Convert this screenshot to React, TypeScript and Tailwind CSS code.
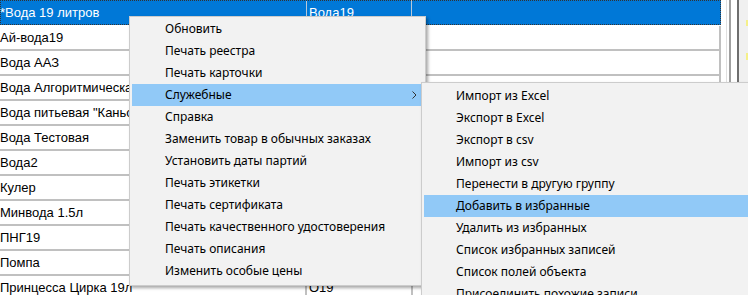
import React from "react";

const rows = [
  { a: "*Вода 19 литров", b: "Вода19" },
  { a: "Ай-вода19", b: "" },
  { a: "Вода ААЗ", b: "" },
  { a: "Вода Алгоритмическая", b: "" },
  { a: "Вода питьевая \"Каньон\"", b: "" },
  { a: "Вода Тестовая", b: "" },
  { a: "Вода2", b: "" },
  { a: "Кулер", b: "" },
  { a: "Минвода 1.5л", b: "" },
  { a: "ПНГ19", b: "" },
  { a: "Помпа", b: "" },
  { a: "Принцесса Цирка 19л", b: "О19" },
];

const mainItems = [
  "Обновить",
  "Печать реестра",
  "Печать карточки",
  "Служебные",
  "Справка",
  "Заменить товар в обычных заказах",
  "Установить даты партий",
  "Печать этикетки",
  "Печать сертификата",
  "Печать качественного удостоверения",
  "Печать описания",
  "Изменить особые цены",
];

const subItems = [
  "Импорт из Excel",
  "Экспорт в Excel",
  "Экспорт в csv",
  "Импорт из csv",
  "Перенести в другую группу",
  "Добавить в избранные",
  "Удалить из избранных",
  "Список избранных записей",
  "Список полей объекта",
  "Присоединить похожие записи",
];

export default function App() {
  return (
    <div className="relative w-[748px] h-[295px] overflow-hidden bg-white">
      <div className="flex h-full">
        <div className="flex flex-col w-[721px] font-['Liberation_Sans',sans-serif] text-[13px] text-black">
          {rows.map((r, i) =>
            i === 0 ? (
              <div key={i} className="relative flex h-[26px] shrink-0 border-b border-white bg-[#0078d7] text-white">
                <div className="w-[307px] pl-0 flex items-center border-r border-[#b8c8d8] whitespace-nowrap overflow-hidden">{r.a}</div>
                <div className="w-[105px] pl-[2px] flex items-center border-r border-[#b8c8d8] whitespace-nowrap overflow-hidden">{r.b}</div>
                <div className="flex-1" />
                <div className="absolute inset-0 border border-dotted border-[#333]" />
              </div>
            ) : (
              <div key={i} className="flex h-[25px] shrink-0 border-b-2 border-[#c0c0c0]">
                <div className="w-[307px] flex items-center border-r-2 border-[#c0c0c0] whitespace-nowrap overflow-hidden">{r.a}</div>
                <div className="w-[106px] pl-[2px] flex items-center border-r-2 border-[#c0c0c0] whitespace-nowrap overflow-hidden">{r.b}</div>
                <div className="flex-1 border-r-2 border-[#c0c0c0]" />
              </div>
            )
          )}
        </div>
        <div className="w-[5px] bg-white" />
        <div className="w-[1px] bg-[#e0e0e0]" />
        <div className="w-[2px] bg-white" />
        <div className="w-[2px] bg-[#a0a0a0]" />
        <div className="w-[6px] bg-white" />
        <div className="w-[2px] bg-[#6e6e6e]" />
        <div className="relative flex-1 bg-[#f0f0f0]">
          <div className="absolute right-0 top-[20px] w-[2px] h-[6px] bg-[#f5f08a]" />
          <div className="absolute right-0 top-[53px] w-[2px] h-[7px] bg-[#f5f08a]" />
        </div>
      </div>

      {/* main context menu */}
      <div className="absolute left-[129px] top-[16px] w-[297px] h-[270px] border border-[#cccccc] bg-[#f2f2f2] px-[2px] py-[1px] shadow-[2px_2px_3px_rgba(0,0,0,0.35)] font-['Noto_Sans',sans-serif] text-[12px] text-black">
        {mainItems.map((t, i) => (
          <div
            key={i}
            className={
              i === 3
                ? "relative flex items-center h-[22px] pl-[33px] bg-[#91c9f7] whitespace-nowrap"
                : "relative flex items-center h-[22px] pl-[33px] whitespace-nowrap"
            }
          >
            {t}
            {i === 3 && (
              <svg className="absolute left-[280px] top-[7px]" width="5" height="8" viewBox="0 0 5 8">
                <polyline points="0.5,0.5 4,4 0.5,7.5" fill="none" stroke="#333" strokeWidth="1" />
              </svg>
            )}
          </div>
        ))}
      </div>

      {/* submenu */}
      <div className="absolute left-[421px] top-[82px] w-[340px] h-[240px] border border-[#cccccc] bg-[#f2f2f2] px-[2px] pt-[2px] shadow-[2px_2px_3px_rgba(0,0,0,0.35)] font-['Noto_Sans',sans-serif] text-[12px] text-black">
        {subItems.map((t, i) => (
          <div
            key={i}
            className={
              i === 5
                ? "flex items-center h-[22px] pl-[32px] bg-[#91c9f7] whitespace-nowrap"
                : "flex items-center h-[22px] pl-[32px] whitespace-nowrap"
            }
          >
            {t}
          </div>
        ))}
      </div>
    </div>
  );
}
